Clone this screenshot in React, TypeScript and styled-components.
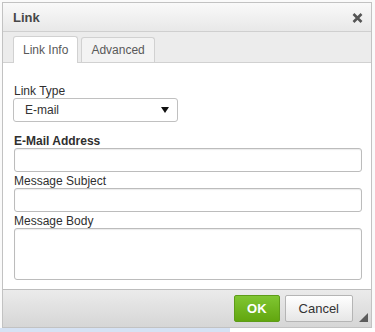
import React from 'react'
import styled, { createGlobalStyle } from 'styled-components'

const Global = createGlobalStyle`
  html, body {
    margin: 0;
    padding: 0;
    background: #fff;
    font-family: "Liberation Sans", Arial, sans-serif;
  }
`

const Page = styled.div`
  width: 375px;
  height: 332px;
  padding: 2px 3px 4px 2px;
  box-sizing: border-box;
  background:
    linear-gradient(to right, #d6e2f4 0, #d6e2f4 230px, #fff 230px) bottom / 100% 4px no-repeat,
    #fafafa;
`

const Dialog = styled.div`
  height: 100%;
  display: flex;
  flex-direction: column;
  border: 1px solid #c2c2c2;
  box-sizing: border-box;
  background: #fff;
`

const TitleBar = styled.div`
  height: 27px;
  flex: none;
  display: flex;
  align-items: center;
  justify-content: space-between;
  padding: 1px 8px 0 10px;
  background: linear-gradient(#f9f9f9, #e8e8e8);
  border-bottom: 1px solid #cfcfcf;
`

const Title = styled.span`
  font-size: 13px;
  font-weight: bold;
  color: #474747;
`

const TabStrip = styled.div`
  height: 30px;
  flex: none;
  display: flex;
  align-items: flex-end;
  gap: 3px;
  padding: 0 0 0 10px;
  background: #ececec;
  border-bottom: 1px solid #d1d1d1;
`

const Tab = styled.div<{ $active?: boolean }>`
  height: ${p => (p.$active ? 27 : 25)}px;
  padding: 0 9px;
  display: flex;
  align-items: center;
  font-size: 12px;
  color: #595959;
  background: ${p => (p.$active ? '#fff' : '#f3f3f3')};
  border: 1px solid #d1d1d1;
  border-bottom: none;
  border-radius: 3px 3px 0 0;
  margin-bottom: ${p => (p.$active ? -1 : 0)}px;
  box-sizing: border-box;
`

const Body = styled.div`
  flex: 1;
  padding: 21px 9px 0 11px;
  display: flex;
  flex-direction: column;
`

const Label = styled.label<{ $bold?: boolean }>`
  font-size: 12px;
  line-height: 14px;
  color: #2f2f2f;
  font-weight: ${p => (p.$bold ? 'bold' : 'normal')};
  margin-top: ${p => (p.$bold ? 12 : 0)}px;
  display: block;
`

const Select = styled.div`
  width: 165px;
  height: 24px;
  margin-left: -1px;
  box-sizing: border-box;
  border: 1px solid #c0c0c0;
  border-radius: 3px;
  display: flex;
  align-items: center;
  justify-content: space-between;
  padding: 0 8px 0 11px;
  font-size: 12px;
  color: #333;
`

const Field = styled.div<{ $h?: number }>`
  height: ${p => p.$h ?? 24}px;
  flex: none;
  box-sizing: border-box;
  border: 1px solid #bcbcbc;
  border-radius: 3px;
  box-shadow: inset 0 1px 1px rgba(0, 0, 0, 0.08);
  margin-bottom: 2px;
`

const Footer = styled.div`
  height: 37px;
  flex: none;
  display: flex;
  align-items: center;
  justify-content: flex-end;
  gap: 5px;
  padding: 0 18px 0 0;
  position: relative;
  background: linear-gradient(#ebebeb, #d6d6d6);
  border-top: 1px solid #bdbdbd;
`

const Button = styled.div<{ $primary?: boolean }>`
  height: 27px;
  box-sizing: border-box;
  display: flex;
  align-items: center;
  justify-content: center;
  font-size: 13px;
  border-radius: 2px;
  padding: 0 ${p => (p.$primary ? 12 : 13)}px;
  font-weight: ${p => (p.$primary ? 'bold' : 'normal')};
  color: ${p => (p.$primary ? '#fff' : '#333')};
  background: ${p => (p.$primary ? 'linear-gradient(#80c632, #62a60f)' : 'linear-gradient(#fff, #e6e6e6)')};
  border: 1px solid ${p => (p.$primary ? '#5e9c19' : '#b5b5b5')};
`

const Grip = styled.div`
  position: absolute;
  right: 3px;
  bottom: 5px;
  width: 0;
  height: 0;
  border-left: 9px solid transparent;
  border-bottom: 9px solid #5c5c5c;
`

export default function App() {
  return (
    <Page>
      <Global />
      <Dialog>
        <TitleBar>
          <Title>Link</Title>
          <svg width="11" height="10" viewBox="0 0 11 10">
            <path d="M1.5 1 L9.5 9 M9.5 1 L1.5 9" stroke="#555" strokeWidth="2.6" />
          </svg>
        </TitleBar>
        <TabStrip>
          <Tab $active>Link Info</Tab>
          <Tab>Advanced</Tab>
        </TabStrip>
        <Body>
          <Label>Link Type</Label>
          <Select>
            <span>E-mail</span>
            <svg width="8" height="6" viewBox="0 0 8 6">
              <path d="M0 0 H8 L4 6 Z" fill="#111" />
            </svg>
          </Select>
          <Label $bold>E-Mail Address</Label>
          <Field />
          <Label>Message Subject</Label>
          <Field />
          <Label>Message Body</Label>
          <Field $h={52} />
        </Body>
        <Footer>
          <Button $primary>OK</Button>
          <Button>Cancel</Button>
          <Grip />
        </Footer>
      </Dialog>
    </Page>
  )
}
